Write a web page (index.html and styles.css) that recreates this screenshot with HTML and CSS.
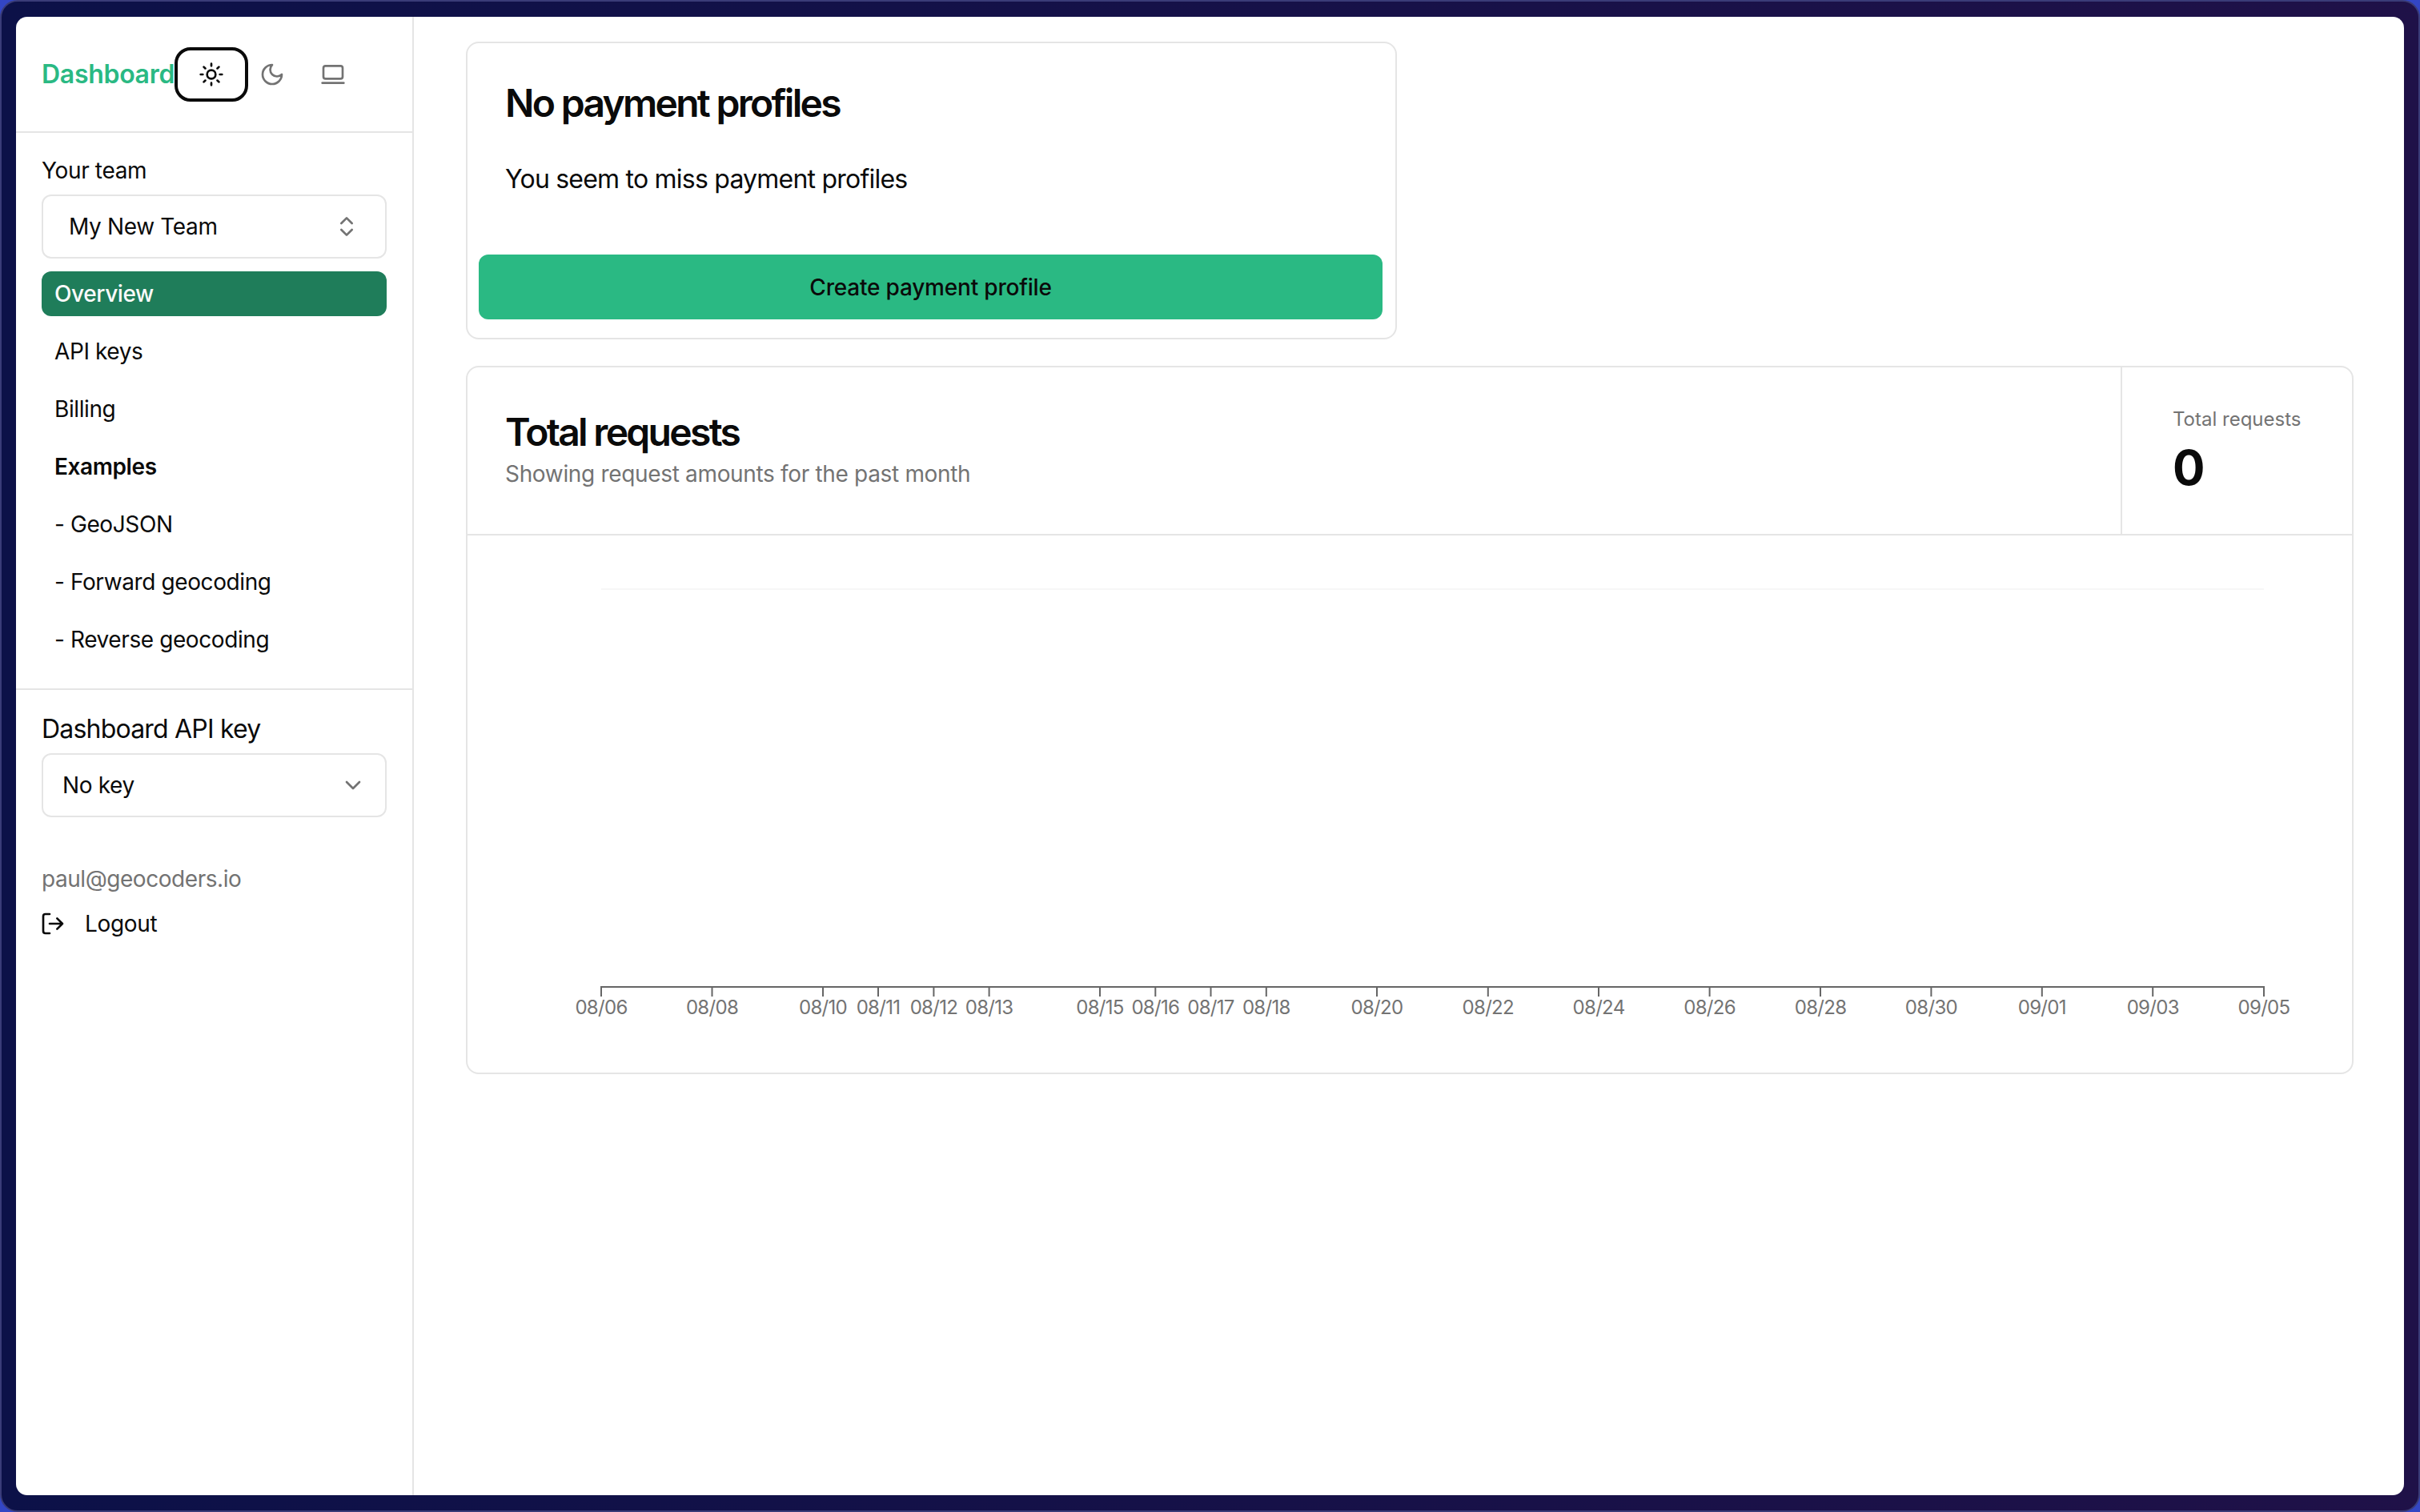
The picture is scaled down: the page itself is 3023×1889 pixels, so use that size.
FILE: index.html
```html
<!DOCTYPE html>
<html lang="en">
<head>
<meta charset="utf-8">
<title>Dashboard</title>
<link rel="stylesheet" href="styles.css">
</head>
<body>
<div class="frame">
  <div class="window">
    <aside class="sidebar">
      <header class="side-head">
        <span class="brand">Dashboard</span>
        <div class="theme-buttons">
          <button class="theme-btn is-active"><svg class="icon" viewBox="0 0 24 24"><circle cx="12" cy="12" r="4"/><path d="M12 2v2M12 20v2M4.93 4.93l1.41 1.41M17.66 17.66l1.41 1.41M2 12h2M20 12h2M6.34 17.66l-1.41 1.41M19.07 4.93l-1.41 1.41"/></svg></button>
          <button class="theme-btn"><svg class="icon" viewBox="0 0 24 24"><path d="M12 3a6 6 0 0 0 9 9 9 9 0 1 1-9-9Z"/></svg></button>
          <button class="theme-btn"><svg class="icon" viewBox="0 0 24 24"><rect x="3" y="4" width="18" height="12" rx="2"/><path d="M2 20h20"/></svg></button>
        </div>
      </header>
      <section class="team-section">
        <div class="team-label">Your team</div>
        <div class="select select-team"><span>My New Team</span><svg class="icon" viewBox="0 0 24 24"><path d="m7 15 5 5 5-5M7 9l5-5 5 5"/></svg></div>
        <nav class="nav">
          <a class="nav-item is-current">Overview</a>
          <a class="nav-item">API keys</a>
          <a class="nav-item">Billing</a>
          <a class="nav-item nav-heading">Examples</a>
          <a class="nav-item">- GeoJSON</a>
          <a class="nav-item">- Forward geocoding</a>
          <a class="nav-item">- Reverse geocoding</a>
        </nav>
      </section>
      <section class="key-section">
        <div class="key-label">Dashboard API key</div>
        <div class="select select-key"><span>No key</span><svg class="icon" viewBox="0 0 24 24"><path d="m6 9 6 6 6-6"/></svg></div>
        <div class="email">paul@geocoders.io</div>
        <a class="logout"><svg class="icon" viewBox="0 0 24 24"><path d="M9 21H5a2 2 0 0 1-2-2V5a2 2 0 0 1 2-2h4M16 17l5-5-5-5M21 12H9"/></svg><span>Logout</span></a>
      </section>
    </aside>
    <main class="main">
      <section class="card card-payment">
        <h2 class="card-title">No payment profiles</h2>
        <p class="card-text">You seem to miss payment profiles</p>
        <button class="primary-btn">Create payment profile</button>
      </section>
      <section class="card card-requests">
        <header class="requests-head">
          <div class="requests-intro">
            <h2 class="card-title">Total requests</h2>
            <p class="requests-sub">Showing request amounts for the past month</p>
          </div>
          <div class="stat">
            <div class="stat-label">Total requests</div>
            <div class="stat-value">0</div>
          </div>
        </header>
        <svg class="chart" viewBox="0 0 2354 671">
          <path class="grid-line" d="M167 67H2244"/>
          <path class="axis" d="M167 576V564H2244V576"/>
          <path class="axis" d="M305.5 564v12M444 564v12M513 564v12M582.4 564v12M651.6 564v12M790 564v12M859.3 564v12M928.5 564v12M997.8 564v12M1136 564v12M1274.8 564v12M1413 564v12M1551.6 564v12M1690 564v12M1828.4 564v12M1966.8 564v12M2105.2 564v12"/>
          <g class="ticks">
            <text x="167" y="598">08/06</text>
            <text x="305.5" y="598">08/08</text>
            <text x="444" y="598">08/10</text>
            <text x="513" y="598">08/11</text>
            <text x="582.4" y="598">08/12</text>
            <text x="651.6" y="598">08/13</text>
            <text x="790" y="598">08/15</text>
            <text x="859.3" y="598">08/16</text>
            <text x="928.5" y="598">08/17</text>
            <text x="997.8" y="598">08/18</text>
            <text x="1136" y="598">08/20</text>
            <text x="1274.8" y="598">08/22</text>
            <text x="1413" y="598">08/24</text>
            <text x="1551.6" y="598">08/26</text>
            <text x="1690" y="598">08/28</text>
            <text x="1828.4" y="598">08/30</text>
            <text x="1966.8" y="598">09/01</text>
            <text x="2105.2" y="598">09/03</text>
            <text x="2244" y="598">09/05</text>
          </g>
        </svg>
      </section>
    </main>
  </div>
</div>
</body>
</html>
```
FILE: styles.css
```css
* { box-sizing: border-box; }
html, body { margin: 0; height: 100%; }
body {
  background: #3346c4;
  font-family: Inter, "Noto Sans", sans-serif;
  color: #0a0a0a;
}
.frame {
  width: 3023px;
  height: 1889px;
  padding: 19px 18px 19px 18px;
  border: 2px solid #3a3c78;
  border-radius: 22px;
  background: linear-gradient(90deg, #0c1148 0%, #1f1148 100%);
}
.window {
  display: flex;
  height: 100%;
  background: #fff;
  border-radius: 14px;
  overflow: hidden;
}
.sidebar {
  flex: none;
  width: 497px;
  border-right: 2px solid #e5e5e5;
}
.side-head {
  display: flex;
  align-items: center;
  gap: 8px;
  height: 145px;
  padding: 1px 0 0 32px;
  border-bottom: 2px solid #e5e5e5;
}
.brand {
  font-size: 32px;
  line-height: 48px;
  font-weight: 600;
  letter-spacing: -0.3px;
  color: #2ab983;
}
.theme-buttons { display: flex; }
.theme-btn {
  display: flex;
  align-items: center;
  justify-content: center;
  width: 76px;
  height: 52px;
  padding: 0;
  border: 0;
  border-radius: 12px;
  background: none;
  color: #737373;
}
.theme-btn.is-active {
  color: #0a0a0a;
  outline: 4px solid #0a0a0a;
  outline-offset: 4px;
}
.icon {
  flex: none;
  width: 32px;
  height: 32px;
  fill: none;
  stroke: currentColor;
  stroke-width: 2;
  stroke-linecap: round;
  stroke-linejoin: round;
}
.team-section {
  padding: 27px 32px 33px;
  border-bottom: 2px solid #e5e5e5;
}
.team-label {
  font-size: 28px;
  line-height: 40px;
  letter-spacing: -0.35px;
  margin-bottom: 10px;
}
.select {
  display: flex;
  align-items: center;
  justify-content: space-between;
  height: 80px;
  border: 2px solid #e5e5e5;
  border-radius: 12px;
  font-size: 28px;
  line-height: 40px;
  letter-spacing: -0.35px;
}
.select .icon { color: #737373; }
.select-team { padding: 0 32px; }
.select-key { padding: 0 24px; }
.nav {
  display: flex;
  flex-direction: column;
  gap: 16px;
  margin-top: 16px;
}
.nav-item {
  height: 56px;
  padding: 0 16px;
  border-radius: 12px;
  font-size: 28px;
  line-height: 56px;
  letter-spacing: -0.4px;
}
.nav-item.is-current {
  background: #1f7d5a;
  color: #fafafa;
  font-weight: 500;
}
.nav-heading { font-weight: 600; }
.key-section { padding: 25px 32px 0; }
.key-label {
  font-size: 32px;
  line-height: 48px;
  letter-spacing: -0.8px;
  margin-bottom: 6px;
}
.email {
  margin-top: 57px;
  font-size: 28px;
  line-height: 40px;
  letter-spacing: -0.45px;
  color: #737373;
}
.logout {
  display: flex;
  align-items: center;
  gap: 24px;
  height: 56px;
  margin-top: 8px;
  margin-left: -2px;
  font-size: 28px;
  letter-spacing: -0.35px;
}
.main {
  flex: 1;
  padding: 31px 63px 0 65px;
}
.card {
  border: 2px solid #e5e5e5;
  border-radius: 16px;
  background: #fff;
}
.card-payment {
  width: 1163px;
  height: 372px;
  padding: 51px 16px 0 14px;
}
.card-title {
  margin: 0;
  font-size: 48px;
  line-height: 48px;
  font-weight: 600;
  letter-spacing: -2.7px;
}
.card-payment .card-title { padding-left: 33px; }
.card-text {
  margin: 47px 0 0;
  padding-left: 33px;
  font-size: 32px;
  line-height: 48px;
  letter-spacing: -0.78px;
}
.primary-btn {
  display: block;
  width: 100%;
  height: 81px;
  margin-top: 70px;
  border: 0;
  border-radius: 12px;
  background: #2ab983;
  color: #0a0a0a;
  font-family: inherit;
  font-size: 28px;
  font-weight: 500;
  letter-spacing: -0.2px;
}
.card-requests {
  height: 885px;
  margin-top: 33px;
}
.requests-head {
  display: flex;
  height: 210px;
  border-bottom: 2px solid #e5e5e5;
}
.requests-intro {
  flex: 1;
  padding: 57px 0 0 47px;
}
.requests-sub {
  margin: 8px 0 0;
  font-size: 28px;
  line-height: 40px;
  letter-spacing: -0.33px;
  color: #737373;
}
.stat {
  flex: none;
  width: 289px;
  padding: 49px 0 0 63px;
  border-left: 2px solid #e5e5e5;
}
.stat-label {
  font-size: 24px;
  line-height: 32px;
  color: #737373;
}
.stat-value {
  margin-top: 8px;
  font-size: 60px;
  line-height: 72px;
  font-weight: 700;
}
.chart {
  display: block;
  width: 100%;
  height: 671px;
}
.grid-line {
  stroke: #f7f7f7;
  stroke-width: 2;
  fill: none;
}
.axis {
  stroke: #666;
  stroke-width: 2;
  fill: none;
}
.ticks text {
  font-size: 24px;
  letter-spacing: -0.7px;
  fill: #737373;
  text-anchor: middle;
}
```
